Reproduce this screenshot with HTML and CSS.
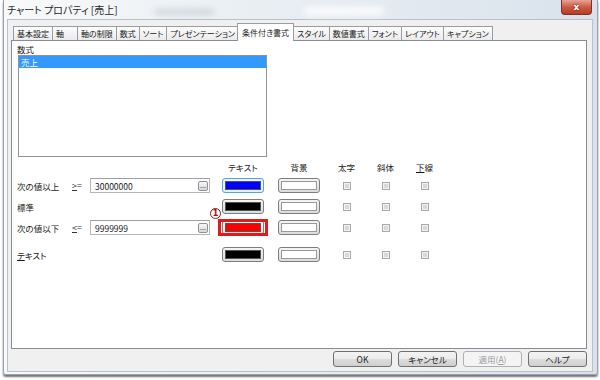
FILE: index.html
```html
<!DOCTYPE html>
<html lang="ja">
<head>
    <meta charset="UTF-8">
    <title>チャート プロパティ [売上]</title>
    <link rel="stylesheet" href="styles.css">
</head>
<body>
    <div class="window">
        <div class="titlebar">
            <span class="title">チャート プロパティ [売上]</span>
            <span class="glass glass-a"></span>
            <span class="glass glass-b"></span>
            <button class="close">x</button>
        </div>

        <div class="client">
            <div class="tabs">
                <div class="tab">基本設定</div>
                <div class="tab tab-axis">軸</div>
                <div class="tab">軸の制限</div>
                <div class="tab">数式</div>
                <div class="tab">ソート</div>
                <div class="tab">プレゼンテーション</div>
                <div class="tab active">条件付き書式</div>
                <div class="tab">スタイル</div>
                <div class="tab">数値書式</div>
                <div class="tab">フォント</div>
                <div class="tab">レイアウト</div>
                <div class="tab">キャプション</div>
            </div>

            <div class="panel">
                <div class="label">数式</div>
                <div class="listbox">
                    <div class="item selected">売上</div>
                </div>

                <!-- 条件ごとの書式 -->
                <div class="rules">
                    <div class="row head">
                        <span class="c-label"></span>
                        <span class="c-op"></span>
                        <span class="c-input"></span>
                        <span class="c-text">テキスト</span>
                        <span class="c-bg">背景</span>
                        <span class="c-cb first">太字</span>
                        <span class="c-cb">斜体</span>
                        <span class="c-cb"><u>下</u>線</span>
                    </div>

                    <div class="row">
                        <span class="c-label">次の値以上</span>
                        <span class="c-op"><u>&gt;</u>=</span>
                        <span class="c-input">
                            <span class="edit"><span class="value">30000000</span><span class="dots">...</span></span>
                        </span>
                        <span class="c-text"><span class="swatch focus"><i class="blue"></i></span></span>
                        <span class="c-bg"><span class="swatch"><i class="white"></i></span></span>
                        <span class="c-cb first"><i class="check"></i></span>
                        <span class="c-cb"><i class="check"></i></span>
                        <span class="c-cb"><i class="check"></i></span>
                    </div>

                    <div class="row">
                        <span class="c-label">標準</span>
                        <span class="c-op"></span>
                        <span class="c-input"></span>
                        <span class="c-text"><span class="swatch"><i class="black"></i></span></span>
                        <span class="c-bg"><span class="swatch"><i class="white"></i></span></span>
                        <span class="c-cb first"><i class="check"></i></span>
                        <span class="c-cb"><i class="check"></i></span>
                        <span class="c-cb"><i class="check"></i></span>
                    </div>

                    <div class="row">
                        <span class="c-label">次の値以下</span>
                        <span class="c-op"><u>&lt;</u>=</span>
                        <span class="c-input">
                            <span class="edit"><span class="value">9999999</span><span class="dots">...</span></span>
                        </span>
                        <span class="c-text">
                            <span class="swatch marked"><i class="red"></i><b class="note">1</b></span>
                        </span>
                        <span class="c-bg"><span class="swatch"><i class="white"></i></span></span>
                        <span class="c-cb first"><i class="check"></i></span>
                        <span class="c-cb"><i class="check"></i></span>
                        <span class="c-cb"><i class="check"></i></span>
                    </div>

                    <div class="row last">
                        <span class="c-label"><u>テ</u>キスト</span>
                        <span class="c-op"></span>
                        <span class="c-input"></span>
                        <span class="c-text"><span class="swatch"><i class="black"></i></span></span>
                        <span class="c-bg"><span class="swatch"><i class="white"></i></span></span>
                        <span class="c-cb first"><i class="check"></i></span>
                        <span class="c-cb"><i class="check"></i></span>
                        <span class="c-cb"><i class="check"></i></span>
                    </div>
                </div>
            </div>

            <div class="buttons">
                <button class="btn">OK</button>
                <button class="btn">キャンセル</button>
                <button class="btn" disabled>適用(<u>A</u>)</button>
                <button class="btn">ヘルプ</button>
            </div>
        </div>
    </div>
</body>
</html>
```

FILE: styles.css
```css
body {
    margin: 0;
    width: 600px;
    height: 380px;
    overflow: hidden;
    background-color: #fff;
    font-family: "Noto Sans CJK JP", "Noto Sans", sans-serif;
    font-feature-settings: "palt";
    font-size: 8.5px;
    color: #1a1a1a;
}

button {
    font-family: inherit;
    font-feature-settings: inherit;
}

.window {
    margin: 0 2px 0 3px;
    height: 375px;
    box-sizing: border-box;
    border: 1px solid #9aa3ad;
    border-top: none;
    border-radius: 0 0 3px 3px;
    background: linear-gradient(to right, #f8f9fa, #e9eef3 45%, #d9e2ec);
    box-shadow: 0 2px 2px rgba(0, 0, 0, 0.55);
    display: flex;
    flex-direction: column;
}

/* タイトルバー */
.titlebar {
    height: 19px;
    position: relative;
    display: flex;
    align-items: center;
    padding-left: 3px;
}

.title {
    font-size: 10px;
    color: #1e1e1e;
}

.glass {
    position: absolute;
    border-radius: 4px;
    filter: blur(3px);
}

.glass-a {
    left: 150px;
    top: 9px;
    width: 60px;
    height: 6px;
    background: rgba(120, 130, 140, 0.25);
}

.glass-b {
    left: 300px;
    top: 6px;
    width: 80px;
    height: 10px;
    background: rgba(255, 255, 255, 0.7);
}

.close {
    margin-left: auto;
    margin-right: 5px;
    align-self: flex-start;
    width: 31px;
    height: 15px;
    padding: 0;
    border: 1px solid #7a3128;
    border-top: none;
    border-radius: 0 0 4px 4px;
    background: linear-gradient(#e6a595, #cc5a43 50%, #b83c25);
    color: #fff;
    font-family: "DejaVu Sans", sans-serif;
    font-size: 9px;
    font-weight: bold;
    line-height: 13px;
    text-shadow: 0 0 2px #5a1a10;
}

/* 本体 */
.client {
    flex: 1;
    margin: 0 4px 2px 3px;
    border: 1px solid #b9c0c8;
    background-color: #f0f0f0;
    display: flex;
    flex-direction: column;
    padding: 3px 5px 4px 3px;
}

.tabs {
    display: flex;
    align-items: flex-end;
    height: 17px;
    padding-left: 2px;
}

.tab {
    height: 14px;
    box-sizing: border-box;
    padding: 0 3px;
    font-size: 8px;
    line-height: 13px;
    border: 1px solid #999da3;
    border-bottom: none;
    margin-right: -1px;
    background: linear-gradient(#fcfcfc, #ebebeb);
    white-space: nowrap;
}

.tab-axis {
    padding-right: 13px;
}

.tab.active {
    height: 18px;
    margin: 0 -1px -1px -1px;
    padding: 2px 4px 0;
    background: #fff;
    position: relative;
    z-index: 1;
}

.panel {
    flex: 1;
    background-color: #fff;
    border: 1px solid #898c95;
    padding: 2px 5px;
}

.label {
    height: 12px;
    line-height: 12px;
}

.listbox {
    width: 249px;
    height: 102px;
    box-sizing: border-box;
    margin-left: 1px;
    border: 1px solid #8e939b;
}

.item {
    height: 12px;
    line-height: 12px;
    padding-left: 2px;
}

.item.selected {
    background-color: #3399ff;
    color: #fff;
}

/* 条件の行 */
.rules {
    margin-top: 4px;
}

.row {
    display: flex;
    align-items: center;
    height: 15px;
    margin-top: 6px;
}

.row.head {
    height: 11px;
    margin-top: 0;
}

.row.last {
    margin-top: 12px;
}

.c-label {
    width: 55px;
}

.c-op {
    width: 18px;
    font-size: 9px;
    color: #333;
}

.c-input {
    width: 120px;
    height: 15px;
}

.c-text {
    width: 42px;
    margin-left: 12px;
    text-align: center;
}

.c-bg {
    width: 42px;
    margin-left: 14px;
    text-align: center;
}

.c-cb {
    width: 39px;
    display: flex;
    justify-content: center;
}

.c-cb.first {
    margin-left: 7px;
}

.edit {
    display: flex;
    align-items: center;
    height: 15px;
    box-sizing: border-box;
    border: 1px solid #b4b7bd;
    border-top-color: #9aa0a8;
    padding: 0 1px 0 4px;
}

.value {
    flex: 1;
}

.dots {
    width: 10px;
    height: 10px;
    box-sizing: border-box;
    border: 1px solid #8f9194;
    border-radius: 2px;
    background: linear-gradient(#f6f6f6, #d9d9d9);
    font-size: 7px;
    line-height: 6px;
    text-align: center;
    color: #333;
}

.swatch {
    display: flex;
    width: 42px;
    height: 15px;
    box-sizing: border-box;
    padding: 2px;
    border: 1px solid #7d7d7d;
    border-radius: 3px;
    background: linear-gradient(#f4f4f4, #dcdcdc);
    position: relative;
}

.swatch.focus {
    border-color: #57a3e0;
    background: #e6f2fb;
}

.swatch i {
    flex: 1;
    border: 1px solid #555;
}

.blue {
    background-color: #0000ff;
}

.black {
    background-color: #000;
}

.red {
    background-color: #ff0000;
}

.swatch i.white {
    background-color: #fff;
    border-color: #999;
}

.swatch.marked::after {
    content: "";
    position: absolute;
    left: -5px;
    right: -5px;
    top: -2px;
    bottom: -2px;
    border: 3px solid #e21a1a;
}

/* 注記の丸数字 */
.note {
    position: absolute;
    left: -13px;
    top: -13px;
    width: 9px;
    height: 9px;
    border: 1px solid #a01010;
    border-radius: 50%;
    background: #fff;
    font-family: "DejaVu Sans", sans-serif;
    font-size: 8px;
    font-weight: bold;
    line-height: 9px;
    text-align: center;
    color: #a01010;
}

.check {
    width: 8px;
    height: 8px;
    box-sizing: border-box;
    border: 1px solid #a9a9a9;
    background-color: #d8d8d8;
    box-shadow: inset 0 0 0 1px #f2f2f2;
}

/* 下のボタン */
.buttons {
    display: flex;
    justify-content: flex-end;
    gap: 6px;
    margin-top: 2px;
}

.btn {
    width: 59px;
    height: 16px;
    padding: 0;
    border: 1px solid #707070;
    border-radius: 3px;
    background: linear-gradient(#f3f3f3, #ebebeb 50%, #dddddd 50%, #cfcfcf);
    font-size: 8.5px;
    color: #1a1a1a;
}

.btn:disabled {
    border-color: #adb2b5;
    background: #f4f4f4;
    color: #9c9c9c;
}
```
